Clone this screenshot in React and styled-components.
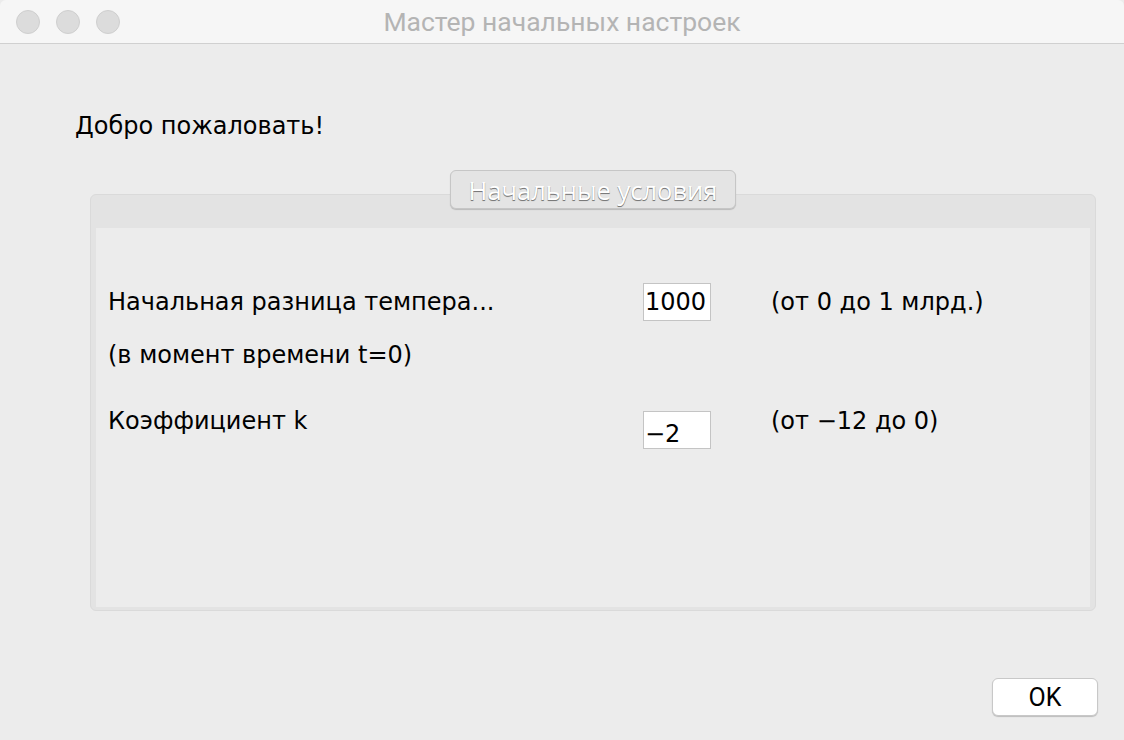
import React from "react";
import styled, { createGlobalStyle } from "styled-components";

const Global = createGlobalStyle`
  html, body { margin: 0; padding: 0; background: #ececec; }
  #root { width: 1124px; height: 740px; }
`;

const Window = styled.div`
  width: 1124px;
  height: 740px;
  display: flex;
  flex-direction: column;
  background: #ececec;
  font-family: "DejaVu Sans", sans-serif;
  color: #000;
  overflow: hidden;
`;

const TitleBar = styled.div`
  height: 43px;
  border-bottom: 1px solid #d0d0d0;
  background: #f6f6f6;
  display: grid;
  grid-template-columns: 1fr auto 1fr;
  align-items: center;
  border-radius: 6px 6px 0 0;
`;

const Lights = styled.div`
  display: flex;
  gap: 16px;
  padding-left: 16px;
`;

const Light = styled.span`
  width: 22px;
  height: 22px;
  border-radius: 50%;
  background: #dcdcdc;
  border: 1px solid #cfcfcf;
`;

const Title = styled.div`
  font-family: Roboto, "Liberation Sans", sans-serif;
  font-size: 26.5px;
  line-height: 43px;
  color: #b4b4b4;
`;

const Content = styled.div`
  flex: 1;
  display: flex;
  flex-direction: column;
`;

const Welcome = styled.div`
  margin: 69px 0 0 75px;
  font-size: 24px;
  line-height: 26px;
`;

const Group = styled.div`
  position: relative;
  margin: 55px 28px 0 90px;
  height: 417px;
  box-sizing: border-box;
  border: 1px solid #dadada;
  border-radius: 6px;
  background: #e3e3e3;
  padding: 33px 5px 3px 5px;
  display: flex;
`;

const Legend = styled.div`
  position: absolute;
  top: -25px;
  left: 50%;
  transform: translateX(-50%);
  width: 286px;
  height: 39px;
  box-sizing: border-box;
  border: 1px solid #c6c6c6;
  border-radius: 6px;
  background: #e4e4e4;
  box-shadow: 0 1px 1px rgba(0, 0, 0, 0.18);
  display: flex;
  align-items: center;
  justify-content: center;
  font-family: "Open Sans", "Liberation Sans", sans-serif;
  font-size: 25.5px;
  color: #ffffff;
  text-shadow: 0 1px 0 #7a7a7a, 0 1px 1px #9a9a9a;
  white-space: nowrap;
`;

const Body = styled.div`
  flex: 1;
  background: #ececec;
  padding: 55px 0 0 12px;
  display: grid;
  grid-template-columns: 535px 68px 60px auto;
  grid-template-rows: 38px 90px 38px;
  align-content: start;
  font-size: 24px;
`;

const Label = styled.div`
  grid-column: 1;
  line-height: ${(p) => p.$lh || 38}px;
  padding-top: ${(p) => p.$pt || 0}px;
  white-space: nowrap;
`;

const Field = styled.div`
  grid-column: 2;
  width: 68px;
  height: 38px;
  box-sizing: border-box;
  border: 1px solid #c4c4c4;
  background: #fff;
  font-size: 24px;
  line-height: ${(p) => p.$lh}px;
  padding-left: 1px;
  white-space: nowrap;
  overflow: hidden;
`;

const Range = styled.div`
  grid-column: 4;
  line-height: ${(p) => p.$lh}px;
  white-space: nowrap;
`;

const Footer = styled.div`
  display: flex;
  justify-content: flex-end;
  padding: 67px 26px 0 0;
`;

const Button = styled.button`
  width: 106px;
  height: 38px;
  border: 1px solid #c8c8c8;
  border-radius: 6px;
  background: #fff;
  box-shadow: 0 1px 1px rgba(0, 0, 0, 0.2);
  font-family: Roboto, "Liberation Sans", sans-serif;
  font-size: 25px;
  color: #000;
  padding: 0;
`;

export default function App() {
  return (
    <Window>
      <Global />
      <TitleBar>
        <Lights>
          <Light />
          <Light />
          <Light />
        </Lights>
        <Title>Мастер начальных настроек</Title>
        <div />
      </TitleBar>
      <Content>
        <Welcome>Добро пожаловать!</Welcome>
        <Group>
          <Legend>Начальные условия</Legend>
          <Body>
            <Label>Начальная разница темпера...</Label>
            <Field $lh={36}>1000</Field>
            <Range $lh={38}>(от 0 до 1 млрд.)</Range>
            <Label $lh={26} $pt={21}>(в момент времени t=0)</Label>
            <Label $lh={20}>Коэффициент k</Label>
            <Field $lh={44}>−2</Field>
            <Range $lh={20}>(от −12 до 0)</Range>
          </Body>
        </Group>
        <Footer>
          <Button>OK</Button>
        </Footer>
      </Content>
    </Window>
  );
}
